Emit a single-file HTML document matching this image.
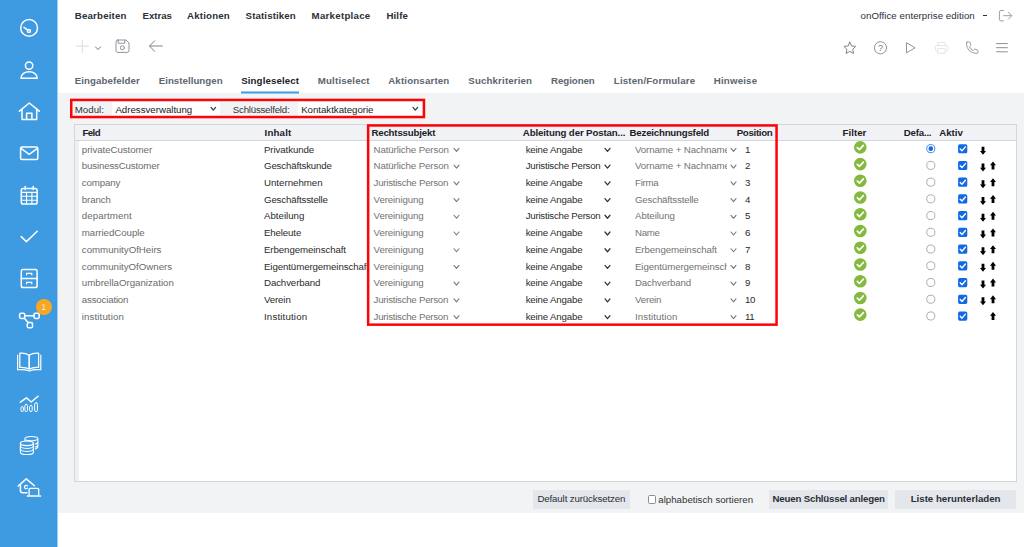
<!DOCTYPE html>
<html lang="de">
<head>
<meta charset="utf-8">
<title>onOffice enterprise edition – Singleselect</title>
<style>
*{box-sizing:border-box;margin:0;padding:0}
html,body{width:1024px;height:547px;overflow:hidden;background:#fff}
body{position:relative;font-family:"Liberation Sans",sans-serif;font-size:9.7px;color:#333;line-height:1}
#side{position:absolute;left:0;top:0;width:58px;height:547px;background:#3e9be2;border-right:1px solid #9fcdf1}
#side svg{position:absolute;overflow:visible;fill:none;stroke:#fff;stroke-width:1.5;stroke-linecap:round;stroke-linejoin:round}
#badge{position:absolute;left:35.8px;top:299px;width:16px;height:16px;border-radius:8px;background:#f6a823;color:#fdebc8;font-size:9px;font-weight:400;text-align:center;line-height:16px}
#menu span{position:absolute;top:10px;font-weight:700;font-size:9.7px;letter-spacing:.15px;color:#2b2f36;white-space:nowrap;line-height:12px}
#edition{position:absolute;top:10px;left:860.5px;font-size:9.7px;letter-spacing:.05px;color:#2b2f36;white-space:nowrap;line-height:12px}
#tabs span{position:absolute;top:74.6px;font-weight:700;font-size:9.7px;letter-spacing:.05px;color:#5d6570;white-space:nowrap;line-height:12px}
#tabs span.on{color:#1d2127}
#tabline{position:absolute;left:241.2px;top:91px;width:58px;height:2px;background:#3d9be2;z-index:2;transform:translateY(.4px) rotate(.001deg)}
.ico{position:absolute;overflow:visible;fill:none;stroke:#8d949e;stroke-width:1;stroke-linecap:round;stroke-linejoin:round}
#graybg{position:absolute;left:58px;top:93.4px;width:966px;height:420px;background:#f1f3f5}
#marks{position:absolute;left:0;top:0;fill:none;stroke:#fd0207;stroke-width:2.5;pointer-events:none}
#filter{position:absolute;left:0;top:0;width:1024px;height:1px;transform:translateY(-0.45px) rotate(0.001deg)}
#filter span.lbl{position:absolute;top:104px;font-size:9.7px;color:#333;white-space:nowrap;line-height:12px;letter-spacing:-.05px}
.sel{position:absolute;top:102px;height:14.4px;background:#fff;font-size:9.7px;line-height:12px;color:#222;white-space:nowrap}
.sel b{font-weight:400;position:absolute;left:3px;top:2px}
.sel svg{position:absolute;overflow:visible}
#panel{position:absolute;left:74.2px;top:124px;width:942.5px;height:358px;border:1px solid #d3d6da;background:#eef0f3}
#thead{position:absolute;left:75.2px;top:125px;width:940.5px;height:15.6px;background:#f1f2f5;border-bottom:1px solid #d3d6da}
#tbody{position:absolute;left:78.8px;top:140.6px;width:937px;height:340.4px;background:#fff}
.th{position:absolute;top:127.4px;font-weight:700;font-size:9.7px;color:#1d2127;white-space:nowrap;line-height:12px;letter-spacing:-.1px}
.row{position:absolute;left:0;top:0;width:1024px;height:17px}
.row span{position:absolute;top:3px;font-size:9.7px;white-space:nowrap;line-height:12px;letter-spacing:-.1px}
.c1{left:81.8px;color:#6b6b6b}
.c2{left:264px;color:#2b2b2b;width:103px;overflow:hidden}
.c3{left:373.6px;color:#737373}
.c4{left:525.7px;color:#2b2b2b}
.c5{left:635px;color:#737373;width:91.5px;overflow:hidden}
.c6{left:745px;color:#2b2b2b}
.row svg{position:absolute;overflow:visible}
svg.chv{position:absolute;overflow:visible;fill:none;stroke-linecap:round;stroke-linejoin:round}
.btn{position:absolute;top:489.5px;height:19.2px;background:#e3e6eb;font-size:9.7px;line-height:17.4px;color:#2b2f36;text-align:center;white-space:nowrap;letter-spacing:-.1px}
.btn.bold{font-weight:700;letter-spacing:-.15px}
.cb{position:absolute;width:8.6px;height:8.6px;border:1px solid #8e8e8e;border-radius:1.6px;background:#fff}
.cbl{position:absolute;font-size:9.7px;line-height:12px;color:#333;white-space:nowrap}
</style>
</head>
<body>
<nav id="side">
<svg width="58" height="547" viewBox="0 0 58 547" style="left:0;top:0">
<!-- dashboard gauge -->
<circle cx="29.1" cy="27.9" r="8.4"/><circle cx="28.9" cy="31" r="1.5"/><path d="M27.7 30.1 L24 27.4"/>
<!-- contacts -->
<circle cx="29.1" cy="65.6" r="3.7"/><path d="M21 78.2 C21 69.6 37.2 69.6 37.2 78.2 Z"/>
<!-- properties -->
<path d="M19.4 111.2 L29.3 103 L39.3 111.2"/><path d="M22 109.4 V119.4 H36.7 V109.4"/><path d="M26.6 119.4 V113.3 H31.9 V119.4"/>
<!-- mail -->
<rect x="20.6" y="147" width="17.2" height="12.6" rx="1.6"/><path d="M21 148.4 L29.2 154.3 L37.4 148.4"/>
<!-- calendar -->
<rect x="21.3" y="188.6" width="15.8" height="15.4" rx="1.8"/><path d="M25.2 186.4 V189.6 M33.2 186.4 V189.6" /><path d="M21.3 192.4 H37.1 M21.3 196.3 H37.1 M21.3 200.2 H37.1 M26.5 192.4 V204 M31.9 192.4 V204" stroke-width="1.1"/>
<!-- tasks -->
<path d="M21.2 236.6 L26.4 241.6 L37.2 231.2"/>
<!-- archive -->
<rect x="21.3" y="269.6" width="15.8" height="18" rx="1.8"/><path d="M21.3 278.6 H37.1"/><path d="M26.6 274.8 V273.4 H31.8 V274.8 M26.6 283.8 V282.4 H31.8 V283.8" stroke-width="1.2"/>
<!-- process -->
<rect x="19.6" y="313.2" width="5.2" height="5.2" rx="1.4"/><rect x="34" y="313.2" width="5.2" height="5.2" rx="1.4"/><rect x="27.3" y="322.6" width="5.2" height="5.2" rx="1.4"/><path d="M24.8 315.8 H34 M24.2 318 L28.2 322.8"/>
<!-- book -->
<path d="M19.8 353.2 Q25.6 352.8 29.2 355.2 V369 Q25.6 367 19.8 367.4 Z" stroke-width="1.25"/><path d="M38.6 353.2 Q32.8 352.8 29.2 355.2 V369 Q32.8 367 38.6 367.4 Z" stroke-width="1.25"/><path d="M17.6 355 V369.8 Q25 369.2 29.2 371 Q33.4 369.2 40.8 369.8 V355" stroke-width="1.15"/>
<!-- statistics -->
<path d="M20.4 402.2 L26.4 397.8 L31.2 402 L38 396.2"/><rect x="21" y="406.6" width="2.4" height="5" rx="1.2" stroke-width="1"/><rect x="24.9" y="404.4" width="2.6" height="7.2" rx="1.3" stroke-width="1"/><rect x="29.6" y="405.4" width="2.6" height="6.2" rx="1.3" stroke-width="1"/><rect x="34.6" y="402.8" width="2.8" height="8.8" rx="1.4" stroke-width="1"/>
<!-- finance -->
<ellipse cx="26.9" cy="443.3" rx="6.5" ry="2.3" stroke-width="1.15"/><path d="M20.4 443.3 V452.2 C20.4 455.3 33.4 455.3 33.4 452.2 V443.3" stroke-width="1.15"/><path d="M20.4 446.3 C20.4 449.3 33.4 449.3 33.4 446.3 M20.4 449.3 C20.4 452.3 33.4 452.3 33.4 449.3" stroke-width="1"/>
<path d="M24.9 440.4 V438.5 C24.9 435.7 37.9 435.7 37.9 438.5 V446.6 C37.9 447.9 36.6 448.6 35.2 448.9 M26 440 C28 441.3 37.9 441.2 37.9 438.5 M37.9 441.4 C37.9 442.9 36.6 443.7 35.2 444 M37.9 444.4 C37.9 445.9 36.6 446.7 35.2 447" stroke-width="1.05"/>
<!-- home office -->
<path d="M18.2 486 L26.3 478.9 L34.4 485.8"/><path d="M20.4 484.6 V490.6 Q20.4 492.8 22.6 492.8 H27"/><path d="M27.5 485.9 A1.7 1.7 0 1 0 27.5 488.1" stroke-width="1.2"/><path d="M29.1 494.4 V489.6 Q29.1 488.3 30.4 488.3 H37.4 Q38.7 488.3 38.7 489.6 V494.4" stroke-width="1.3"/><path d="M27.6 496 H40.4" stroke-width="1.7"/>
</svg>
<div id="badge">1</div>
</nav>
<header id="hdr">
<div id="menu"><span class="m" style="left:74.8px;letter-spacing:0.18px">Bearbeiten</span><span class="m" style="left:142.5px;letter-spacing:-0.05px">Extras</span><span class="m" style="left:187px;letter-spacing:0.19px">Aktionen</span><span class="m" style="left:245.6px;letter-spacing:0.12px">Statistiken</span><span class="m" style="left:311.6px;letter-spacing:0.26px">Marketplace</span><span class="m" style="left:386.4px;letter-spacing:0.14px">Hilfe</span></div>
<div id="edition">onOffice enterprise edition</div><div id="dash" style="position:absolute;left:983px;top:15px;width:4.4px;height:1.1px;background:#2b2f36"></div>
<svg class="ico" style="left:0;top:0" width="1024" height="60" viewBox="0 0 1024 60">
<!-- logout -->
<path transform="translate(0,0.6)" d="M1003.4 9.9 H1001 Q999.4 9.9 999.4 11.5 V18.7 Q999.4 20.3 1001 20.3 H1003.4 M1003.6 15.1 H1011.6 M1008.4 11.6 L1011.8 15.1 L1008.4 18.6" stroke="#9aa0a8"/>
<!-- plus -->
<path d="M76.2 46.2 H88.4 M82.3 40.1 V52.3" stroke="#dfe2e6" stroke-width="1.2"/>
<path d="M95.5 46.9 L98 49.5 L100.5 46.9" stroke="#737984" stroke-width="1"/>
<!-- save -->
<path d="M117.8 40 H126 L129 43 V50.6 Q129 52.4 127.2 52.4 H117.8 Q116 52.4 116 50.6 V41.8 Q116 40 117.8 40 Z M118.2 40.2 V43.2 H124.8 V40.2"/><circle cx="122.4" cy="47.8" r="2"/>
<!-- back -->
<path d="M149.6 46 H162.4 M154.6 40.8 L149.6 46 L154.6 51.4" stroke="#7d838d"/>
<!-- star -->
<path d="M849.8 42.1 L851.6 45.9 L855.7 46.4 L852.7 49.3 L853.5 53.4 L849.8 51.4 L846.1 53.4 L846.9 49.3 L843.9 46.4 L848 45.9 Z" stroke="#7d838d"/>
<!-- help -->
<circle cx="880.5" cy="47.8" r="6.1"/>
<!-- play -->
<path d="M906.8 42.9 L915.1 47.8 L906.8 52.7 Z"/>
<!-- print -->
<path d="M938 45.6 V42.4 H945.2 V45.6 M938 50.8 H936.4 Q935.4 50.8 935.4 49.8 V46.6 Q935.4 45.6 936.4 45.6 H946.8 Q947.8 45.6 947.8 46.6 V49.8 Q947.8 50.8 946.8 50.8 H945.2 M938 48.6 H945.2 V53.2 H938 Z" stroke="#e3e6ea"/>
<!-- phone -->
<path d="M966.6 42.4 L968.6 42 Q969.4 41.9 969.7 42.7 L970.7 45.1 Q971 45.8 970.4 46.3 L969.2 47.3 Q970.6 50 973.3 51.4 L974.3 50.2 Q974.8 49.6 975.5 49.9 L977.9 50.9 Q978.7 51.2 978.6 52 L978.2 54 Q978 54.6 977.2 54.6 Q966 53.6 966 43.2 Q966 42.6 966.6 42.4 Z" transform="translate(972.3 47.7) scale(0.93) translate(-972.3 -48.3)"/>
<!-- menu -->
<path d="M996.6 43.6 H1007.4 M996.6 47.7 H1007.4 M996.6 51.8 H1007.4" stroke="#8a8f97"/>
</svg>
<span id="qm" style="position:absolute;left:878px;top:42.8px;font-size:9px;line-height:10px;color:#7b818b">?</span>
<div id="tabs"><span class="t" style="left:74.8px;letter-spacing:0.08px">Eingabefelder</span><span class="t" style="left:158.7px;letter-spacing:0.03px">Einstellungen</span><span class="t on" style="left:241.2px;letter-spacing:0.12px">Singleselect</span><span class="t" style="left:317.8px;letter-spacing:0.17px">Multiselect</span><span class="t" style="left:388.2px;letter-spacing:0.17px">Aktionsarten</span><span class="t" style="left:468.3px;letter-spacing:0.15px">Suchkriterien</span><span class="t" style="left:551.1px;letter-spacing:-0.07px">Regionen</span><span class="t" style="left:613.8px;letter-spacing:0.18px">Listen/Formulare</span><span class="t" style="left:713.7px;letter-spacing:0.2px">Hinweise</span></div>
<div id="tabline"></div>
</header>
<div id="graybg"></div>
<main id="content">
<div id="panel"></div><div id="thead"></div><div id="tbody"></div>
<div id="filter">
<span class="lbl" style="left:74.7px;letter-spacing:0.04px">Modul:</span>
<div class="sel" style="left:112.4px;width:108px"><b class="selt" style="letter-spacing:-0.01px">Adressverwaltung</b><svg class="chv" style="left:98.6px;top:5px" width="4.6" height="2.7" viewBox="0 -0.9 4.6 2.7"><path d="M0 0 L2.3 2.7 L4.6 0" stroke="#363c47" stroke-width="1.3"/></svg></div>
<span class="lbl" style="left:232.8px;letter-spacing:-0.23px">Schlüsselfeld:</span>
<div class="sel" style="left:298.2px;width:124px"><b class="selt" style="letter-spacing:-0.03px">Kontaktkategorie</b><svg class="chv" style="left:115.2px;top:5px" width="4.6" height="2.7" viewBox="0 -0.9 4.6 2.7"><path d="M0 0 L2.3 2.7 L4.6 0" stroke="#363c47" stroke-width="1.3"/></svg></div>
</div>
<div id="ths"><span class="th" style="left:82.5px;letter-spacing:-0.6px">Feld</span><span class="th" style="left:264.6px;letter-spacing:0.16px">Inhalt</span><span class="th" style="left:371.4px;letter-spacing:-0.18px">Rechtssubjekt</span><span class="th" style="left:522.8px;letter-spacing:-0.13px">Ableitung der Postan...</span><span class="th" style="left:629.6px;letter-spacing:-0.22px">Bezeichnungsfeld</span><span class="th" style="left:736.7px;letter-spacing:-0.31px">Position</span><span class="th" style="left:842.6px;letter-spacing:0.02px">Filter</span><span class="th" style="left:903.7px;letter-spacing:-0.2px">Defa...</span><span class="th" style="left:939.2px;letter-spacing:0.02px">Aktiv</span></div>
<div id="rows">
<div class="row" style="transform:translateY(140.55px) rotate(0.001deg)"><span class="c1" style="letter-spacing:-0.05px">privateCustomer</span><span class="c2" style="letter-spacing:-0.09px">Privatkunde</span><span class="c3" style="letter-spacing:-0.11px">Natürliche Person</span><svg class="chv" style="left:454px;top:7px" width="5.0" height="3.0" viewBox="0 -0.8 5.0 3.0"><path d="M0 0 L2.5 3.0 L5.0 0" stroke="#757a82" stroke-width="1.1"/></svg><span class="c4" style="letter-spacing:-0.16px">keine Angabe</span><svg class="chv" style="left:605px;top:7px" width="5.0" height="3.0" viewBox="0 -0.8 5.0 3.0"><path d="M0 0 L2.5 3.0 L5.0 0" stroke="#30343a" stroke-width="1.25"/></svg><span class="c5">Vorname + Nachname</span><svg class="chv" style="left:731px;top:7px" width="5.0" height="3.0" viewBox="0 -0.8 5.0 3.0"><path d="M0 0 L2.5 3.0 L5.0 0" stroke="#757a82" stroke-width="1.1"/></svg><span class="c6">1</span><svg style="left:854.3px;top:0px" width="12.6" height="12.6" viewBox="0 -0.5 12.6 12.6"><circle cx="6.3" cy="6.3" r="6.3" fill="#83b93c"/><path d="M3.3 6.5 L5.4 8.6 L9.4 4.3" fill="none" stroke="#fff" stroke-width="1.7" stroke-linecap="round" stroke-linejoin="round"/></svg><svg style="left:925.8px;top:3px" width="9.6" height="9.6" viewBox="0 -0.3 9.6 9.6"><circle cx="4.8" cy="4.8" r="4.05" fill="#fff" stroke="#2f7be9" stroke-width="0.9"/><circle cx="4.8" cy="4.8" r="2.3" fill="#1269e6"/></svg><svg style="left:957.7px;top:3px" width="9.6" height="9.6" viewBox="0 -0.4 9.6 9.6"><rect x="0.1" y="0.2" width="9.2" height="9.2" rx="1.6" fill="#1269e6"/><path d="M2.2 5 L4 6.9 L7.4 2.9" fill="none" stroke="#fff" stroke-width="1.4" stroke-linecap="round" stroke-linejoin="round"/></svg><svg style="left:979.9px;top:6px" width="6" height="8" viewBox="0 -0.2 6 8"><path d="M1.6 0 H4.4 V4.2 H6 L3 8 L0 4.2 H1.6 Z" fill="#000"/></svg></div>
<div class="row" style="transform:translateY(157.28px) rotate(0.001deg)"><span class="c1" style="letter-spacing:-0.16px">businessCustomer</span><span class="c2" style="letter-spacing:-0.16px">Geschäftskunde</span><span class="c3" style="letter-spacing:-0.11px">Natürliche Person</span><svg class="chv" style="left:454px;top:7px" width="5.0" height="3.0" viewBox="0 -0.8 5.0 3.0"><path d="M0 0 L2.5 3.0 L5.0 0" stroke="#757a82" stroke-width="1.1"/></svg><span class="c4" style="letter-spacing:-0.24px">Juristische Person</span><svg class="chv" style="left:605px;top:7px" width="5.0" height="3.0" viewBox="0 -0.8 5.0 3.0"><path d="M0 0 L2.5 3.0 L5.0 0" stroke="#30343a" stroke-width="1.25"/></svg><span class="c5">Vorname + Nachname</span><svg class="chv" style="left:731px;top:7px" width="5.0" height="3.0" viewBox="0 -0.8 5.0 3.0"><path d="M0 0 L2.5 3.0 L5.0 0" stroke="#757a82" stroke-width="1.1"/></svg><span class="c6">2</span><svg style="left:854.3px;top:0px" width="12.6" height="12.6" viewBox="0 -0.5 12.6 12.6"><circle cx="6.3" cy="6.3" r="6.3" fill="#83b93c"/><path d="M3.3 6.5 L5.4 8.6 L9.4 4.3" fill="none" stroke="#fff" stroke-width="1.7" stroke-linecap="round" stroke-linejoin="round"/></svg><svg style="left:925.8px;top:3px" width="9.6" height="9.6" viewBox="0 -0.3 9.6 9.6"><circle cx="4.8" cy="4.8" r="4.05" fill="#fff" stroke="#9a9ea6" stroke-width="0.85"/></svg><svg style="left:957.7px;top:3px" width="9.6" height="9.6" viewBox="0 -0.4 9.6 9.6"><rect x="0.1" y="0.2" width="9.2" height="9.2" rx="1.6" fill="#1269e6"/><path d="M2.2 5 L4 6.9 L7.4 2.9" fill="none" stroke="#fff" stroke-width="1.4" stroke-linecap="round" stroke-linejoin="round"/></svg><svg style="left:979.9px;top:6px" width="6" height="8" viewBox="0 -0.2 6 8"><path d="M1.6 0 H4.4 V4.2 H6 L3 8 L0 4.2 H1.6 Z" fill="#000"/></svg><svg style="left:990px;top:4px" width="6" height="8" viewBox="0 -0.2 6 8"><path d="M1.6 8 H4.4 V3.8 H6 L3 0 L0 3.8 H1.6 Z" fill="#000"/></svg></div>
<div class="row" style="transform:translateY(174.01px) rotate(0.001deg)"><span class="c1" style="letter-spacing:-0.14px">company</span><span class="c2" style="letter-spacing:-0.01px">Unternehmen</span><span class="c3" style="letter-spacing:-0.26px">Juristische Person</span><svg class="chv" style="left:454px;top:7px" width="5.0" height="3.0" viewBox="0 -0.8 5.0 3.0"><path d="M0 0 L2.5 3.0 L5.0 0" stroke="#757a82" stroke-width="1.1"/></svg><span class="c4" style="letter-spacing:-0.16px">keine Angabe</span><svg class="chv" style="left:605px;top:7px" width="5.0" height="3.0" viewBox="0 -0.8 5.0 3.0"><path d="M0 0 L2.5 3.0 L5.0 0" stroke="#30343a" stroke-width="1.25"/></svg><span class="c5" style="letter-spacing:-0.25px">Firma</span><svg class="chv" style="left:731px;top:7px" width="5.0" height="3.0" viewBox="0 -0.8 5.0 3.0"><path d="M0 0 L2.5 3.0 L5.0 0" stroke="#757a82" stroke-width="1.1"/></svg><span class="c6">3</span><svg style="left:854.3px;top:0px" width="12.6" height="12.6" viewBox="0 -0.5 12.6 12.6"><circle cx="6.3" cy="6.3" r="6.3" fill="#83b93c"/><path d="M3.3 6.5 L5.4 8.6 L9.4 4.3" fill="none" stroke="#fff" stroke-width="1.7" stroke-linecap="round" stroke-linejoin="round"/></svg><svg style="left:925.8px;top:3px" width="9.6" height="9.6" viewBox="0 -0.3 9.6 9.6"><circle cx="4.8" cy="4.8" r="4.05" fill="#fff" stroke="#9a9ea6" stroke-width="0.85"/></svg><svg style="left:957.7px;top:3px" width="9.6" height="9.6" viewBox="0 -0.4 9.6 9.6"><rect x="0.1" y="0.2" width="9.2" height="9.2" rx="1.6" fill="#1269e6"/><path d="M2.2 5 L4 6.9 L7.4 2.9" fill="none" stroke="#fff" stroke-width="1.4" stroke-linecap="round" stroke-linejoin="round"/></svg><svg style="left:979.9px;top:6px" width="6" height="8" viewBox="0 -0.2 6 8"><path d="M1.6 0 H4.4 V4.2 H6 L3 8 L0 4.2 H1.6 Z" fill="#000"/></svg><svg style="left:990px;top:4px" width="6" height="8" viewBox="0 -0.2 6 8"><path d="M1.6 8 H4.4 V3.8 H6 L3 0 L0 3.8 H1.6 Z" fill="#000"/></svg></div>
<div class="row" style="transform:translateY(190.74px) rotate(0.001deg)"><span class="c1" style="letter-spacing:-0.12px">branch</span><span class="c2" style="letter-spacing:-0.16px">Geschäftsstelle</span><span class="c3" style="letter-spacing:-0.11px">Vereinigung</span><svg class="chv" style="left:454px;top:7px" width="5.0" height="3.0" viewBox="0 -0.8 5.0 3.0"><path d="M0 0 L2.5 3.0 L5.0 0" stroke="#757a82" stroke-width="1.1"/></svg><span class="c4" style="letter-spacing:-0.16px">keine Angabe</span><svg class="chv" style="left:605px;top:7px" width="5.0" height="3.0" viewBox="0 -0.8 5.0 3.0"><path d="M0 0 L2.5 3.0 L5.0 0" stroke="#30343a" stroke-width="1.25"/></svg><span class="c5" style="letter-spacing:-0.18px">Geschäftsstelle</span><svg class="chv" style="left:731px;top:7px" width="5.0" height="3.0" viewBox="0 -0.8 5.0 3.0"><path d="M0 0 L2.5 3.0 L5.0 0" stroke="#757a82" stroke-width="1.1"/></svg><span class="c6">4</span><svg style="left:854.3px;top:0px" width="12.6" height="12.6" viewBox="0 -0.5 12.6 12.6"><circle cx="6.3" cy="6.3" r="6.3" fill="#83b93c"/><path d="M3.3 6.5 L5.4 8.6 L9.4 4.3" fill="none" stroke="#fff" stroke-width="1.7" stroke-linecap="round" stroke-linejoin="round"/></svg><svg style="left:925.8px;top:3px" width="9.6" height="9.6" viewBox="0 -0.3 9.6 9.6"><circle cx="4.8" cy="4.8" r="4.05" fill="#fff" stroke="#9a9ea6" stroke-width="0.85"/></svg><svg style="left:957.7px;top:3px" width="9.6" height="9.6" viewBox="0 -0.4 9.6 9.6"><rect x="0.1" y="0.2" width="9.2" height="9.2" rx="1.6" fill="#1269e6"/><path d="M2.2 5 L4 6.9 L7.4 2.9" fill="none" stroke="#fff" stroke-width="1.4" stroke-linecap="round" stroke-linejoin="round"/></svg><svg style="left:979.9px;top:6px" width="6" height="8" viewBox="0 -0.2 6 8"><path d="M1.6 0 H4.4 V4.2 H6 L3 8 L0 4.2 H1.6 Z" fill="#000"/></svg><svg style="left:990px;top:4px" width="6" height="8" viewBox="0 -0.2 6 8"><path d="M1.6 8 H4.4 V3.8 H6 L3 0 L0 3.8 H1.6 Z" fill="#000"/></svg></div>
<div class="row" style="transform:translateY(207.47px) rotate(0.001deg)"><span class="c1" style="letter-spacing:0.09px">department</span><span class="c2" style="letter-spacing:-0.0px">Abteilung</span><span class="c3" style="letter-spacing:-0.11px">Vereinigung</span><svg class="chv" style="left:454px;top:7px" width="5.0" height="3.0" viewBox="0 -0.8 5.0 3.0"><path d="M0 0 L2.5 3.0 L5.0 0" stroke="#757a82" stroke-width="1.1"/></svg><span class="c4" style="letter-spacing:-0.24px">Juristische Person</span><svg class="chv" style="left:605px;top:7px" width="5.0" height="3.0" viewBox="0 -0.8 5.0 3.0"><path d="M0 0 L2.5 3.0 L5.0 0" stroke="#30343a" stroke-width="1.25"/></svg><span class="c5" style="letter-spacing:-0.06px">Abteilung</span><svg class="chv" style="left:731px;top:7px" width="5.0" height="3.0" viewBox="0 -0.8 5.0 3.0"><path d="M0 0 L2.5 3.0 L5.0 0" stroke="#757a82" stroke-width="1.1"/></svg><span class="c6">5</span><svg style="left:854.3px;top:0px" width="12.6" height="12.6" viewBox="0 -0.5 12.6 12.6"><circle cx="6.3" cy="6.3" r="6.3" fill="#83b93c"/><path d="M3.3 6.5 L5.4 8.6 L9.4 4.3" fill="none" stroke="#fff" stroke-width="1.7" stroke-linecap="round" stroke-linejoin="round"/></svg><svg style="left:925.8px;top:3px" width="9.6" height="9.6" viewBox="0 -0.3 9.6 9.6"><circle cx="4.8" cy="4.8" r="4.05" fill="#fff" stroke="#9a9ea6" stroke-width="0.85"/></svg><svg style="left:957.7px;top:3px" width="9.6" height="9.6" viewBox="0 -0.4 9.6 9.6"><rect x="0.1" y="0.2" width="9.2" height="9.2" rx="1.6" fill="#1269e6"/><path d="M2.2 5 L4 6.9 L7.4 2.9" fill="none" stroke="#fff" stroke-width="1.4" stroke-linecap="round" stroke-linejoin="round"/></svg><svg style="left:979.9px;top:6px" width="6" height="8" viewBox="0 -0.2 6 8"><path d="M1.6 0 H4.4 V4.2 H6 L3 8 L0 4.2 H1.6 Z" fill="#000"/></svg><svg style="left:990px;top:4px" width="6" height="8" viewBox="0 -0.2 6 8"><path d="M1.6 8 H4.4 V3.8 H6 L3 0 L0 3.8 H1.6 Z" fill="#000"/></svg></div>
<div class="row" style="transform:translateY(224.20px) rotate(0.001deg)"><span class="c1" style="letter-spacing:-0.05px">marriedCouple</span><span class="c2" style="letter-spacing:-0.14px">Eheleute</span><span class="c3" style="letter-spacing:-0.11px">Vereinigung</span><svg class="chv" style="left:454px;top:7px" width="5.0" height="3.0" viewBox="0 -0.8 5.0 3.0"><path d="M0 0 L2.5 3.0 L5.0 0" stroke="#757a82" stroke-width="1.1"/></svg><span class="c4" style="letter-spacing:-0.16px">keine Angabe</span><svg class="chv" style="left:605px;top:7px" width="5.0" height="3.0" viewBox="0 -0.8 5.0 3.0"><path d="M0 0 L2.5 3.0 L5.0 0" stroke="#30343a" stroke-width="1.25"/></svg><span class="c5" style="letter-spacing:-0.31px">Name</span><svg class="chv" style="left:731px;top:7px" width="5.0" height="3.0" viewBox="0 -0.8 5.0 3.0"><path d="M0 0 L2.5 3.0 L5.0 0" stroke="#757a82" stroke-width="1.1"/></svg><span class="c6">6</span><svg style="left:854.3px;top:0px" width="12.6" height="12.6" viewBox="0 -0.5 12.6 12.6"><circle cx="6.3" cy="6.3" r="6.3" fill="#83b93c"/><path d="M3.3 6.5 L5.4 8.6 L9.4 4.3" fill="none" stroke="#fff" stroke-width="1.7" stroke-linecap="round" stroke-linejoin="round"/></svg><svg style="left:925.8px;top:3px" width="9.6" height="9.6" viewBox="0 -0.3 9.6 9.6"><circle cx="4.8" cy="4.8" r="4.05" fill="#fff" stroke="#9a9ea6" stroke-width="0.85"/></svg><svg style="left:957.7px;top:3px" width="9.6" height="9.6" viewBox="0 -0.4 9.6 9.6"><rect x="0.1" y="0.2" width="9.2" height="9.2" rx="1.6" fill="#1269e6"/><path d="M2.2 5 L4 6.9 L7.4 2.9" fill="none" stroke="#fff" stroke-width="1.4" stroke-linecap="round" stroke-linejoin="round"/></svg><svg style="left:979.9px;top:6px" width="6" height="8" viewBox="0 -0.2 6 8"><path d="M1.6 0 H4.4 V4.2 H6 L3 8 L0 4.2 H1.6 Z" fill="#000"/></svg><svg style="left:990px;top:4px" width="6" height="8" viewBox="0 -0.2 6 8"><path d="M1.6 8 H4.4 V3.8 H6 L3 0 L0 3.8 H1.6 Z" fill="#000"/></svg></div>
<div class="row" style="transform:translateY(240.93px) rotate(0.001deg)"><span class="c1" style="letter-spacing:-0.0px">communityOfHeirs</span><span class="c2" style="letter-spacing:-0.09px">Erbengemeinschaft</span><span class="c3" style="letter-spacing:-0.11px">Vereinigung</span><svg class="chv" style="left:454px;top:7px" width="5.0" height="3.0" viewBox="0 -0.8 5.0 3.0"><path d="M0 0 L2.5 3.0 L5.0 0" stroke="#757a82" stroke-width="1.1"/></svg><span class="c4" style="letter-spacing:-0.16px">keine Angabe</span><svg class="chv" style="left:605px;top:7px" width="5.0" height="3.0" viewBox="0 -0.8 5.0 3.0"><path d="M0 0 L2.5 3.0 L5.0 0" stroke="#30343a" stroke-width="1.25"/></svg><span class="c5" style="letter-spacing:-0.09px">Erbengemeinschaft</span><svg class="chv" style="left:731px;top:7px" width="5.0" height="3.0" viewBox="0 -0.8 5.0 3.0"><path d="M0 0 L2.5 3.0 L5.0 0" stroke="#757a82" stroke-width="1.1"/></svg><span class="c6">7</span><svg style="left:854.3px;top:0px" width="12.6" height="12.6" viewBox="0 -0.5 12.6 12.6"><circle cx="6.3" cy="6.3" r="6.3" fill="#83b93c"/><path d="M3.3 6.5 L5.4 8.6 L9.4 4.3" fill="none" stroke="#fff" stroke-width="1.7" stroke-linecap="round" stroke-linejoin="round"/></svg><svg style="left:925.8px;top:3px" width="9.6" height="9.6" viewBox="0 -0.3 9.6 9.6"><circle cx="4.8" cy="4.8" r="4.05" fill="#fff" stroke="#9a9ea6" stroke-width="0.85"/></svg><svg style="left:957.7px;top:3px" width="9.6" height="9.6" viewBox="0 -0.4 9.6 9.6"><rect x="0.1" y="0.2" width="9.2" height="9.2" rx="1.6" fill="#1269e6"/><path d="M2.2 5 L4 6.9 L7.4 2.9" fill="none" stroke="#fff" stroke-width="1.4" stroke-linecap="round" stroke-linejoin="round"/></svg><svg style="left:979.9px;top:6px" width="6" height="8" viewBox="0 -0.2 6 8"><path d="M1.6 0 H4.4 V4.2 H6 L3 8 L0 4.2 H1.6 Z" fill="#000"/></svg><svg style="left:990px;top:4px" width="6" height="8" viewBox="0 -0.2 6 8"><path d="M1.6 8 H4.4 V3.8 H6 L3 0 L0 3.8 H1.6 Z" fill="#000"/></svg></div>
<div class="row" style="transform:translateY(257.66px) rotate(0.001deg)"><span class="c1" style="letter-spacing:-0.01px">communityOfOwners</span><span class="c2">Eigentümergemeinschaft</span><span class="c3" style="letter-spacing:-0.11px">Vereinigung</span><svg class="chv" style="left:454px;top:7px" width="5.0" height="3.0" viewBox="0 -0.8 5.0 3.0"><path d="M0 0 L2.5 3.0 L5.0 0" stroke="#757a82" stroke-width="1.1"/></svg><span class="c4" style="letter-spacing:-0.16px">keine Angabe</span><svg class="chv" style="left:605px;top:7px" width="5.0" height="3.0" viewBox="0 -0.8 5.0 3.0"><path d="M0 0 L2.5 3.0 L5.0 0" stroke="#30343a" stroke-width="1.25"/></svg><span class="c5">Eigentümergemeinschaft</span><svg class="chv" style="left:731px;top:7px" width="5.0" height="3.0" viewBox="0 -0.8 5.0 3.0"><path d="M0 0 L2.5 3.0 L5.0 0" stroke="#757a82" stroke-width="1.1"/></svg><span class="c6">8</span><svg style="left:854.3px;top:0px" width="12.6" height="12.6" viewBox="0 -0.5 12.6 12.6"><circle cx="6.3" cy="6.3" r="6.3" fill="#83b93c"/><path d="M3.3 6.5 L5.4 8.6 L9.4 4.3" fill="none" stroke="#fff" stroke-width="1.7" stroke-linecap="round" stroke-linejoin="round"/></svg><svg style="left:925.8px;top:3px" width="9.6" height="9.6" viewBox="0 -0.3 9.6 9.6"><circle cx="4.8" cy="4.8" r="4.05" fill="#fff" stroke="#9a9ea6" stroke-width="0.85"/></svg><svg style="left:957.7px;top:3px" width="9.6" height="9.6" viewBox="0 -0.4 9.6 9.6"><rect x="0.1" y="0.2" width="9.2" height="9.2" rx="1.6" fill="#1269e6"/><path d="M2.2 5 L4 6.9 L7.4 2.9" fill="none" stroke="#fff" stroke-width="1.4" stroke-linecap="round" stroke-linejoin="round"/></svg><svg style="left:979.9px;top:6px" width="6" height="8" viewBox="0 -0.2 6 8"><path d="M1.6 0 H4.4 V4.2 H6 L3 8 L0 4.2 H1.6 Z" fill="#000"/></svg><svg style="left:990px;top:4px" width="6" height="8" viewBox="0 -0.2 6 8"><path d="M1.6 8 H4.4 V3.8 H6 L3 0 L0 3.8 H1.6 Z" fill="#000"/></svg></div>
<div class="row" style="transform:translateY(274.39px) rotate(0.001deg)"><span class="c1" style="letter-spacing:0.0px">umbrellaOrganization</span><span class="c2" style="letter-spacing:-0.12px">Dachverband</span><span class="c3" style="letter-spacing:-0.11px">Vereinigung</span><svg class="chv" style="left:454px;top:7px" width="5.0" height="3.0" viewBox="0 -0.8 5.0 3.0"><path d="M0 0 L2.5 3.0 L5.0 0" stroke="#757a82" stroke-width="1.1"/></svg><span class="c4" style="letter-spacing:-0.16px">keine Angabe</span><svg class="chv" style="left:605px;top:7px" width="5.0" height="3.0" viewBox="0 -0.8 5.0 3.0"><path d="M0 0 L2.5 3.0 L5.0 0" stroke="#30343a" stroke-width="1.25"/></svg><span class="c5" style="letter-spacing:-0.15px">Dachverband</span><svg class="chv" style="left:731px;top:7px" width="5.0" height="3.0" viewBox="0 -0.8 5.0 3.0"><path d="M0 0 L2.5 3.0 L5.0 0" stroke="#757a82" stroke-width="1.1"/></svg><span class="c6">9</span><svg style="left:854.3px;top:0px" width="12.6" height="12.6" viewBox="0 -0.5 12.6 12.6"><circle cx="6.3" cy="6.3" r="6.3" fill="#83b93c"/><path d="M3.3 6.5 L5.4 8.6 L9.4 4.3" fill="none" stroke="#fff" stroke-width="1.7" stroke-linecap="round" stroke-linejoin="round"/></svg><svg style="left:925.8px;top:3px" width="9.6" height="9.6" viewBox="0 -0.3 9.6 9.6"><circle cx="4.8" cy="4.8" r="4.05" fill="#fff" stroke="#9a9ea6" stroke-width="0.85"/></svg><svg style="left:957.7px;top:3px" width="9.6" height="9.6" viewBox="0 -0.4 9.6 9.6"><rect x="0.1" y="0.2" width="9.2" height="9.2" rx="1.6" fill="#1269e6"/><path d="M2.2 5 L4 6.9 L7.4 2.9" fill="none" stroke="#fff" stroke-width="1.4" stroke-linecap="round" stroke-linejoin="round"/></svg><svg style="left:979.9px;top:6px" width="6" height="8" viewBox="0 -0.2 6 8"><path d="M1.6 0 H4.4 V4.2 H6 L3 8 L0 4.2 H1.6 Z" fill="#000"/></svg><svg style="left:990px;top:4px" width="6" height="8" viewBox="0 -0.2 6 8"><path d="M1.6 8 H4.4 V3.8 H6 L3 0 L0 3.8 H1.6 Z" fill="#000"/></svg></div>
<div class="row" style="transform:translateY(291.12px) rotate(0.001deg)"><span class="c1" style="letter-spacing:-0.18px">association</span><span class="c2" style="letter-spacing:-0.14px">Verein</span><span class="c3" style="letter-spacing:-0.26px">Juristische Person</span><svg class="chv" style="left:454px;top:7px" width="5.0" height="3.0" viewBox="0 -0.8 5.0 3.0"><path d="M0 0 L2.5 3.0 L5.0 0" stroke="#757a82" stroke-width="1.1"/></svg><span class="c4" style="letter-spacing:-0.16px">keine Angabe</span><svg class="chv" style="left:605px;top:7px" width="5.0" height="3.0" viewBox="0 -0.8 5.0 3.0"><path d="M0 0 L2.5 3.0 L5.0 0" stroke="#30343a" stroke-width="1.25"/></svg><span class="c5" style="letter-spacing:-0.21px">Verein</span><svg class="chv" style="left:731px;top:7px" width="5.0" height="3.0" viewBox="0 -0.8 5.0 3.0"><path d="M0 0 L2.5 3.0 L5.0 0" stroke="#757a82" stroke-width="1.1"/></svg><span class="c6" style="letter-spacing:-0.29px">10</span><svg style="left:854.3px;top:0px" width="12.6" height="12.6" viewBox="0 -0.5 12.6 12.6"><circle cx="6.3" cy="6.3" r="6.3" fill="#83b93c"/><path d="M3.3 6.5 L5.4 8.6 L9.4 4.3" fill="none" stroke="#fff" stroke-width="1.7" stroke-linecap="round" stroke-linejoin="round"/></svg><svg style="left:925.8px;top:3px" width="9.6" height="9.6" viewBox="0 -0.3 9.6 9.6"><circle cx="4.8" cy="4.8" r="4.05" fill="#fff" stroke="#9a9ea6" stroke-width="0.85"/></svg><svg style="left:957.7px;top:3px" width="9.6" height="9.6" viewBox="0 -0.4 9.6 9.6"><rect x="0.1" y="0.2" width="9.2" height="9.2" rx="1.6" fill="#1269e6"/><path d="M2.2 5 L4 6.9 L7.4 2.9" fill="none" stroke="#fff" stroke-width="1.4" stroke-linecap="round" stroke-linejoin="round"/></svg><svg style="left:979.9px;top:6px" width="6" height="8" viewBox="0 -0.2 6 8"><path d="M1.6 0 H4.4 V4.2 H6 L3 8 L0 4.2 H1.6 Z" fill="#000"/></svg><svg style="left:990px;top:4px" width="6" height="8" viewBox="0 -0.2 6 8"><path d="M1.6 8 H4.4 V3.8 H6 L3 0 L0 3.8 H1.6 Z" fill="#000"/></svg></div>
<div class="row" style="transform:translateY(307.85px) rotate(0.001deg)"><span class="c1" style="letter-spacing:0.11px">institution</span><span class="c2" style="letter-spacing:0.16px">Institution</span><span class="c3" style="letter-spacing:-0.26px">Juristische Person</span><svg class="chv" style="left:454px;top:7px" width="5.0" height="3.0" viewBox="0 -0.8 5.0 3.0"><path d="M0 0 L2.5 3.0 L5.0 0" stroke="#757a82" stroke-width="1.1"/></svg><span class="c4" style="letter-spacing:-0.16px">keine Angabe</span><svg class="chv" style="left:605px;top:7px" width="5.0" height="3.0" viewBox="0 -0.8 5.0 3.0"><path d="M0 0 L2.5 3.0 L5.0 0" stroke="#30343a" stroke-width="1.25"/></svg><span class="c5" style="letter-spacing:0.08px">Institution</span><svg class="chv" style="left:731px;top:7px" width="5.0" height="3.0" viewBox="0 -0.8 5.0 3.0"><path d="M0 0 L2.5 3.0 L5.0 0" stroke="#757a82" stroke-width="1.1"/></svg><span class="c6" style="letter-spacing:-0.43px">11</span><svg style="left:854.3px;top:0px" width="12.6" height="12.6" viewBox="0 -0.5 12.6 12.6"><circle cx="6.3" cy="6.3" r="6.3" fill="#83b93c"/><path d="M3.3 6.5 L5.4 8.6 L9.4 4.3" fill="none" stroke="#fff" stroke-width="1.7" stroke-linecap="round" stroke-linejoin="round"/></svg><svg style="left:925.8px;top:3px" width="9.6" height="9.6" viewBox="0 -0.3 9.6 9.6"><circle cx="4.8" cy="4.8" r="4.05" fill="#fff" stroke="#9a9ea6" stroke-width="0.85"/></svg><svg style="left:957.7px;top:3px" width="9.6" height="9.6" viewBox="0 -0.4 9.6 9.6"><rect x="0.1" y="0.2" width="9.2" height="9.2" rx="1.6" fill="#1269e6"/><path d="M2.2 5 L4 6.9 L7.4 2.9" fill="none" stroke="#fff" stroke-width="1.4" stroke-linecap="round" stroke-linejoin="round"/></svg><svg style="left:990px;top:4px" width="6" height="8" viewBox="0 -0.2 6 8"><path d="M1.6 8 H4.4 V3.8 H6 L3 0 L0 3.8 H1.6 Z" fill="#000"/></svg></div>
</div>
<svg id="marks" width="1024" height="547" viewBox="0 0 1024 547"><rect x="71.25" y="99.95" width="352.7" height="17.1"/><rect x="368.15" y="125.45" width="408.4" height="199.2"/></svg>
<div class="btn" style="left:533px;width:96.7px"><span class="btnt" style="letter-spacing:-0.13px">Default zurücksetzen</span></div>
<div class="cb" style="left:647.5px;top:495px"></div><span class="cbl" style="left:658.3px;top:493.6px;letter-spacing:-0.0px">alphabetisch sortieren</span>
<div class="btn bold" style="left:769px;width:119.4px"><span class="btnt" style="letter-spacing:-0.2px">Neuen Schlüssel anlegen</span></div>
<div class="btn bold" style="left:894.8px;width:121.6px"><span class="btnt" style="letter-spacing:-0.0px">Liste herunterladen</span></div>
</main>
</body>
</html>
